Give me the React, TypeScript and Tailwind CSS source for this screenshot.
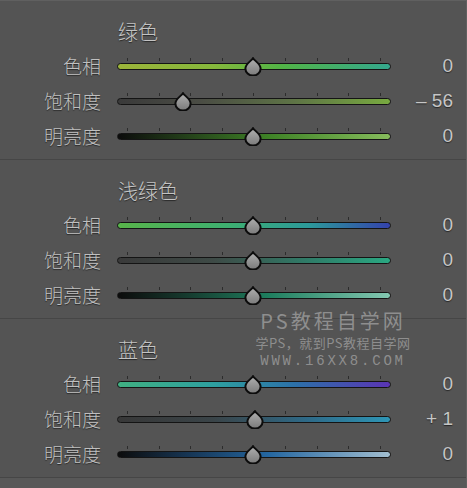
import React from 'react'

type Row = { label: string; value: string; pos: number; grad: string }
type Section = { title: string; rows: Row[] }

const sections: Section[] = [
  {
    title: '绿色',
    rows: [
      { label: '色相', value: '0', pos: 136, grad: 'linear-gradient(90deg,#9cb43a 0%,#86b83c 35%,#52b446 60%,#34a88e 100%)' },
      { label: '饱和度', value: '– 56', pos: 66, grad: 'linear-gradient(90deg,#3a3a3a 0%,#4a4c44 30%,#5e7446 65%,#78aa40 100%)' },
      { label: '明亮度', value: '0', pos: 136, grad: 'linear-gradient(90deg,#0c0c0c 0%,#24401a 25%,#3e8226 55%,#86bc5c 100%)' },
    ],
  },
  {
    title: '浅绿色',
    rows: [
      { label: '色相', value: '0', pos: 136, grad: 'linear-gradient(90deg,#58b44a 0%,#3eb070 40%,#2c9a9a 70%,#3442ac 100%)' },
      { label: '饱和度', value: '0', pos: 136, grad: 'linear-gradient(90deg,#3a3a3a 0%,#3e4a46 35%,#2f7c68 70%,#2aa882 100%)' },
      { label: '明亮度', value: '0', pos: 136, grad: 'linear-gradient(90deg,#0c0c0c 0%,#163a2e 25%,#1e7e5e 55%,#84c8b2 100%)' },
    ],
  },
  {
    title: '蓝色',
    rows: [
      { label: '色相', value: '0', pos: 136, grad: 'linear-gradient(90deg,#40b082 0%,#2ea0a0 35%,#2c70a8 65%,#5a34b4 100%)' },
      { label: '饱和度', value: '+ 1', pos: 138, grad: 'linear-gradient(90deg,#383838 0%,#3a4448 35%,#2e6a88 70%,#2e96b6 100%)' },
      { label: '明亮度', value: '0', pos: 136, grad: 'linear-gradient(90deg,#0c0c0c 0%,#163452 25%,#2466a0 55%,#a2bed0 100%)' },
    ],
  },
]

const ticks = [0, 1, 2, 3, 4, 5, 6, 7, 8]

function Thumb() {
  return (
    <svg width="18" height="19" viewBox="0 0 18 19">
      <defs>
        <linearGradient id="tg" x1="0" y1="0" x2="0" y2="1">
          <stop offset="0" stopColor="#b0b0b0" />
          <stop offset="1" stopColor="#7a7a7a" />
        </linearGradient>
      </defs>
      <path d="M9 1.2 C10.5 3.6 16.6 7 16.6 11.4 A7.6 7.2 0 0 1 1.4 11.4 C1.4 7 7.5 3.6 9 1.2 Z" fill="url(#tg)" stroke="#0c0c0c" strokeWidth="2" />
    </svg>
  )
}

function Slider({ row }: { row: Row }) {
  return (
    <div className="relative w-[274px] h-full">
      {ticks.map((i) => (
        <div
          key={i}
          className="absolute top-[9px] w-px h-[3px] bg-[#2c2c2c]"
          style={{ left: 10 + i * 31.6 }}
        />
      ))}
      <div
        className="absolute left-0 right-0 top-[14px] h-[7px] rounded-full border border-[#141414]"
        style={{ background: row.grad }}
      />
      <div className="absolute top-[8px]" style={{ left: row.pos - 9 }}>
        <Thumb />
      </div>
    </div>
  )
}

export default function App() {
  return (
    <div className="relative w-[467px] h-[488px] bg-[#545454] border-t border-r border-[#606060] overflow-hidden font-['Noto_Sans_CJK_SC',sans-serif]">
      {sections.map((s) => (
        <div key={s.title} className="pt-[19px] pb-[5px] border-b border-[#464646]">
          <div className="h-[24px] pl-[118px] text-[20px] leading-[24px] text-[#c4c4c4] font-light [text-shadow:0_1px_1px_rgba(0,0,0,0.55)]">
            {s.title}
          </div>
          <div className="mt-[5px] flex flex-col">
            {s.rows.map((r) => (
              <div key={r.label} className="flex items-center h-[35px]">
                <div className="w-[101px] text-right text-[19px] font-light text-[#c0c0c0] [text-shadow:0_1px_1px_rgba(0,0,0,0.55)]">
                  {r.label}
                </div>
                <div className="ml-[16px] h-full">
                  <Slider row={r} />
                </div>
                <div className="w-[62px] text-right text-[19px] text-[#c6c6c6] font-['Liberation_Sans',sans-serif] [text-shadow:0_1px_1px_rgba(0,0,0,0.55)]">
                  {r.value}
                </div>
              </div>
            ))}
          </div>
        </div>
      ))}
      <div className="h-full bg-[#585858]" />

      {/* watermark */}
      <div className="absolute left-[255px] top-[309px] w-[156px] flex flex-col items-center text-[#8e8e8e] pointer-events-none">
        <div className="h-[22px] text-[20px] leading-[22px] tracking-[3px] whitespace-nowrap">PS教程自学网</div>
        <div className="mt-[4px] h-[14px] text-[13px] leading-[14px] tracking-[0.5px] whitespace-nowrap">学PS，就到PS教程自学网</div>
        <div className="mt-[4px] h-[14px] text-[14px] leading-[14px] tracking-[2.8px] whitespace-nowrap font-['Liberation_Mono',monospace]">WWW.16XX8.COM</div>
      </div>
    </div>
  )
}
